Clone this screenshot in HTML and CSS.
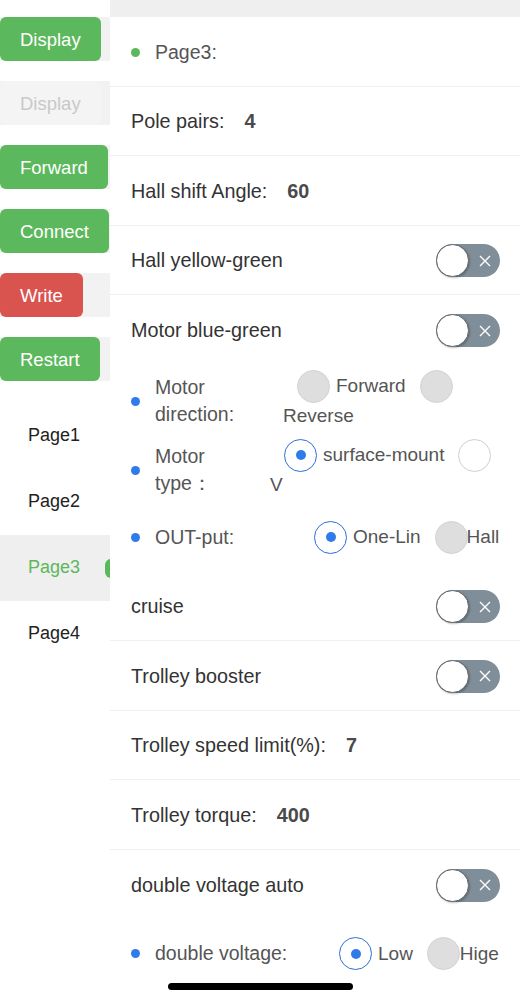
FILE: index.html
```html
<!DOCTYPE html>
<html lang="en">
<head>
<meta charset="utf-8">
<title>Settings</title>
<link rel="stylesheet" href="styles.css">
</head>
<body>
<div class="app">
  <aside class="side">
    <div class="btn-row"><span class="btn green">Display</span></div>
    <div class="btn-row"><span class="btn disabled">Display</span></div>
    <div class="btn-row"><span class="btn green">Forward</span></div>
    <div class="btn-row"><span class="btn green">Connect</span></div>
    <div class="btn-row"><span class="btn red">Write</span></div>
    <div class="btn-row last"><span class="btn green">Restart</span></div>
    <ul class="pages">
      <li class="page">Page1</li>
      <li class="page">Page2</li>
      <li class="page on">Page3<i class="tag"></i></li>
      <li class="page">Page4</li>
    </ul>
  </aside>

  <main class="main">
    <div class="topbar"></div>

    <div class="row">
      <i class="dot dot-green"></i><span class="rlabel">Page3:</span>
    </div>

    <div class="row">
      <span class="label">Pole pairs:</span><span class="value">4</span>
    </div>

    <div class="row">
      <span class="label">Hall shift Angle:</span><span class="value">60</span>
    </div>

    <div class="row">
      <span class="label">Hall yellow-green</span>
      <span class="switch"><i class="knob"></i><svg class="x" width="12" height="12" viewBox="0 0 12 12"><path d="M1 1L11 11M11 1L1 11" stroke="#fff" stroke-width="1.4" fill="none"/></svg></span>
    </div>

    <div class="row noborder">
      <span class="label">Motor blue-green</span>
      <span class="switch"><i class="knob"></i><svg class="x" width="12" height="12" viewBox="0 0 12 12"><path d="M1 1L11 11M11 1L1 11" stroke="#fff" stroke-width="1.4" fill="none"/></svg></span>
    </div>

    <div class="rrow shift">
      <i class="dot dot-blue"></i><span class="rlabel narrow">Motor direction:</span>
      <div class="rg g-dir">
        <div class="rl"><i class="rd gray first"></i><span class="rt">Forward</span><i class="rd gray next"></i></div>
        <div class="rl"><span class="rt wrap">Reverse</span></div>
      </div>
    </div>

    <div class="rrow shift">
      <i class="dot dot-blue"></i><span class="rlabel narrow">Motor type：</span>
      <div class="rg g-type">
        <div class="rl"><i class="rd sel first"></i><span class="rt">surface-mount</span><i class="rd white next"></i></div>
        <div class="rl"><span class="rt wrap">V</span></div>
      </div>
    </div>

    <div class="rrow">
      <i class="dot dot-blue"></i><span class="rlabel">OUT-put:</span>
      <div class="rg g-out">
        <div class="rl"><i class="rd sel first"></i><span class="rt">One-Lin</span><i class="rd gray next"></i><span class="rt tight">Hall</span></div>
      </div>
    </div>

    <div class="row">
      <span class="label">cruise</span>
      <span class="switch"><i class="knob"></i><svg class="x" width="12" height="12" viewBox="0 0 12 12"><path d="M1 1L11 11M11 1L1 11" stroke="#fff" stroke-width="1.4" fill="none"/></svg></span>
    </div>

    <div class="row">
      <span class="label">Trolley booster</span>
      <span class="switch"><i class="knob"></i><svg class="x" width="12" height="12" viewBox="0 0 12 12"><path d="M1 1L11 11M11 1L1 11" stroke="#fff" stroke-width="1.4" fill="none"/></svg></span>
    </div>

    <div class="row">
      <span class="label">Trolley speed limit(%):</span><span class="value">7</span>
    </div>

    <div class="row">
      <span class="label">Trolley torque:</span><span class="value">400</span>
    </div>

    <div class="row noborder">
      <span class="label">double voltage auto</span>
      <span class="switch"><i class="knob"></i><svg class="x" width="12" height="12" viewBox="0 0 12 12"><path d="M1 1L11 11M11 1L1 11" stroke="#fff" stroke-width="1.4" fill="none"/></svg></span>
    </div>

    <div class="rrow">
      <i class="dot dot-blue"></i><span class="rlabel">double voltage:</span>
      <div class="rg g-dv">
        <div class="rl"><i class="rd sel first"></i><span class="rt">Low</span><i class="rd gray next"></i><span class="rt none">Hige</span></div>
      </div>
    </div>
  </main>

  <div class="home-bar"></div>
</div>
</body>
</html>
```

FILE: styles.css
```css
* { box-sizing: border-box; }

html, body {
  margin: 0;
  padding: 0;
  background: #fff;
}

body {
  font-family: "Liberation Sans", Arial, Helvetica, sans-serif;
  color: #333;
  overflow: hidden;
}

.app {
  display: flex;
  width: 520px;
  height: 1000px;
}

/* ---------- sidebar ---------- */
.side {
  width: 110px;
  flex: none;
  padding-top: 17px;
  overflow: hidden;
}

.btn-row {
  display: flex;
  height: 44px;
  background: #f2f2f2;
  margin-bottom: 20px;
}

.btn-row.last { margin-bottom: 22px; }

.btn {
  display: block;
  height: 44px;
  line-height: 46px;
  padding: 0 20px;
  border-radius: 6px;
  font-size: 18.5px;
  color: #fff;
  white-space: nowrap;
}

.btn.green { background: #5cb85c; }
.btn.red { background: #d9534f; }
.btn.disabled { background: #f4f4f4; color: #c9c9c9; }

.pages {
  list-style: none;
  margin: 0;
  padding: 0;
}

.page {
  position: relative;
  height: 66px;
  line-height: 64px;
  padding-left: 28px;
  font-size: 18px;
  color: #222;
}

.page.on {
  background: #efefef;
  color: #5cb85c;
}

.tag {
  position: absolute;
  left: 105px;
  top: 24px;
  width: 20px;
  height: 19px;
  border-radius: 6px;
  background: #5cb85c;
}

/* ---------- main ---------- */
.main {
  flex: 1;
  min-width: 0;
}

.topbar {
  height: 17px;
  background: #efefef;
}

.row {
  display: flex;
  align-items: center;
  height: 69.5px;
  padding: 2px 20px 0 21px;
  border-bottom: 1px solid #efefef;
  font-size: 19.8px;
}

.row.noborder { border-bottom: none; }

.label { color: #333; }

.value {
  margin-left: 20px;
  font-weight: bold;
  color: #4a4a4a;
}

.dot {
  display: block;
  flex: none;
  width: 9px;
  height: 9px;
  border-radius: 50%;
}

.dot-green { background: #5cb85c; }
.dot-blue { background: #2f7bea; }

.rlabel {
  margin-left: 15px;
  color: #555;
  font-size: 19.5px;
  line-height: 27px;
}

.rlabel.narrow { width: 100px; flex: none; }

/* switch */
.switch {
  margin-left: auto;
  display: flex;
  align-items: center;
  width: 64px;
  height: 33px;
  border-radius: 17px;
  background: #7f8e98;
  flex: none;
}

.knob {
  display: block;
  width: 33px;
  height: 33px;
  border-radius: 50%;
  background: #fff;
  border: 1px solid #5f6469;
  box-shadow: 1px 1px 2px rgba(0, 0, 0, 0.25);
}

.switch .x { margin-left: 10px; }

/* radio rows */
.rrow {
  display: flex;
  align-items: center;
  height: 69px;
  padding: 0 20px 0 21px;
}

.rrow.shift { padding-top: 4px; }

.rg {
  margin-left: auto;
  flex: none;
  display: flex;
  flex-direction: column;
}

.g-dir { width: 217px; }
.g-type { width: 230px; }
.g-out { width: 200px; }
.g-dv { width: 175px; }

.rl {
  display: flex;
  align-items: center;
  height: 30px;
}

.rd {
  display: block;
  flex: none;
  width: 33px;
  height: 33px;
  border-radius: 50%;
  position: relative;
}

.rd.first { margin-left: 14px; }
.rd.next { margin-left: 14px; }

.rd.gray {
  background: #dedede;
  border: 1px solid #d2d2d2;
}

.rd.white {
  background: #fff;
  border: 1px solid #cfcfcf;
}

.rd.sel {
  background: #fff;
  border: 1.5px solid #2c6fd6;
}

.rd.sel::after {
  content: "";
  position: absolute;
  left: 50%;
  top: 50%;
  width: 10px;
  height: 10px;
  margin: -5px 0 0 -5px;
  border-radius: 50%;
  background: #2f7bea;
}

.rt {
  flex: none;
  margin-left: 6px;
  font-size: 19px;
  color: #555;
  white-space: nowrap;
}

.rt.wrap { margin-left: 0; }
.rt.tight { margin-left: -1px; }
.rt.none { margin-left: 0; }

/* home indicator */
.home-bar {
  position: fixed;
  left: 168px;
  top: 983px;
  width: 185px;
  height: 7px;
  border-radius: 4px;
  background: #000;
}
```
